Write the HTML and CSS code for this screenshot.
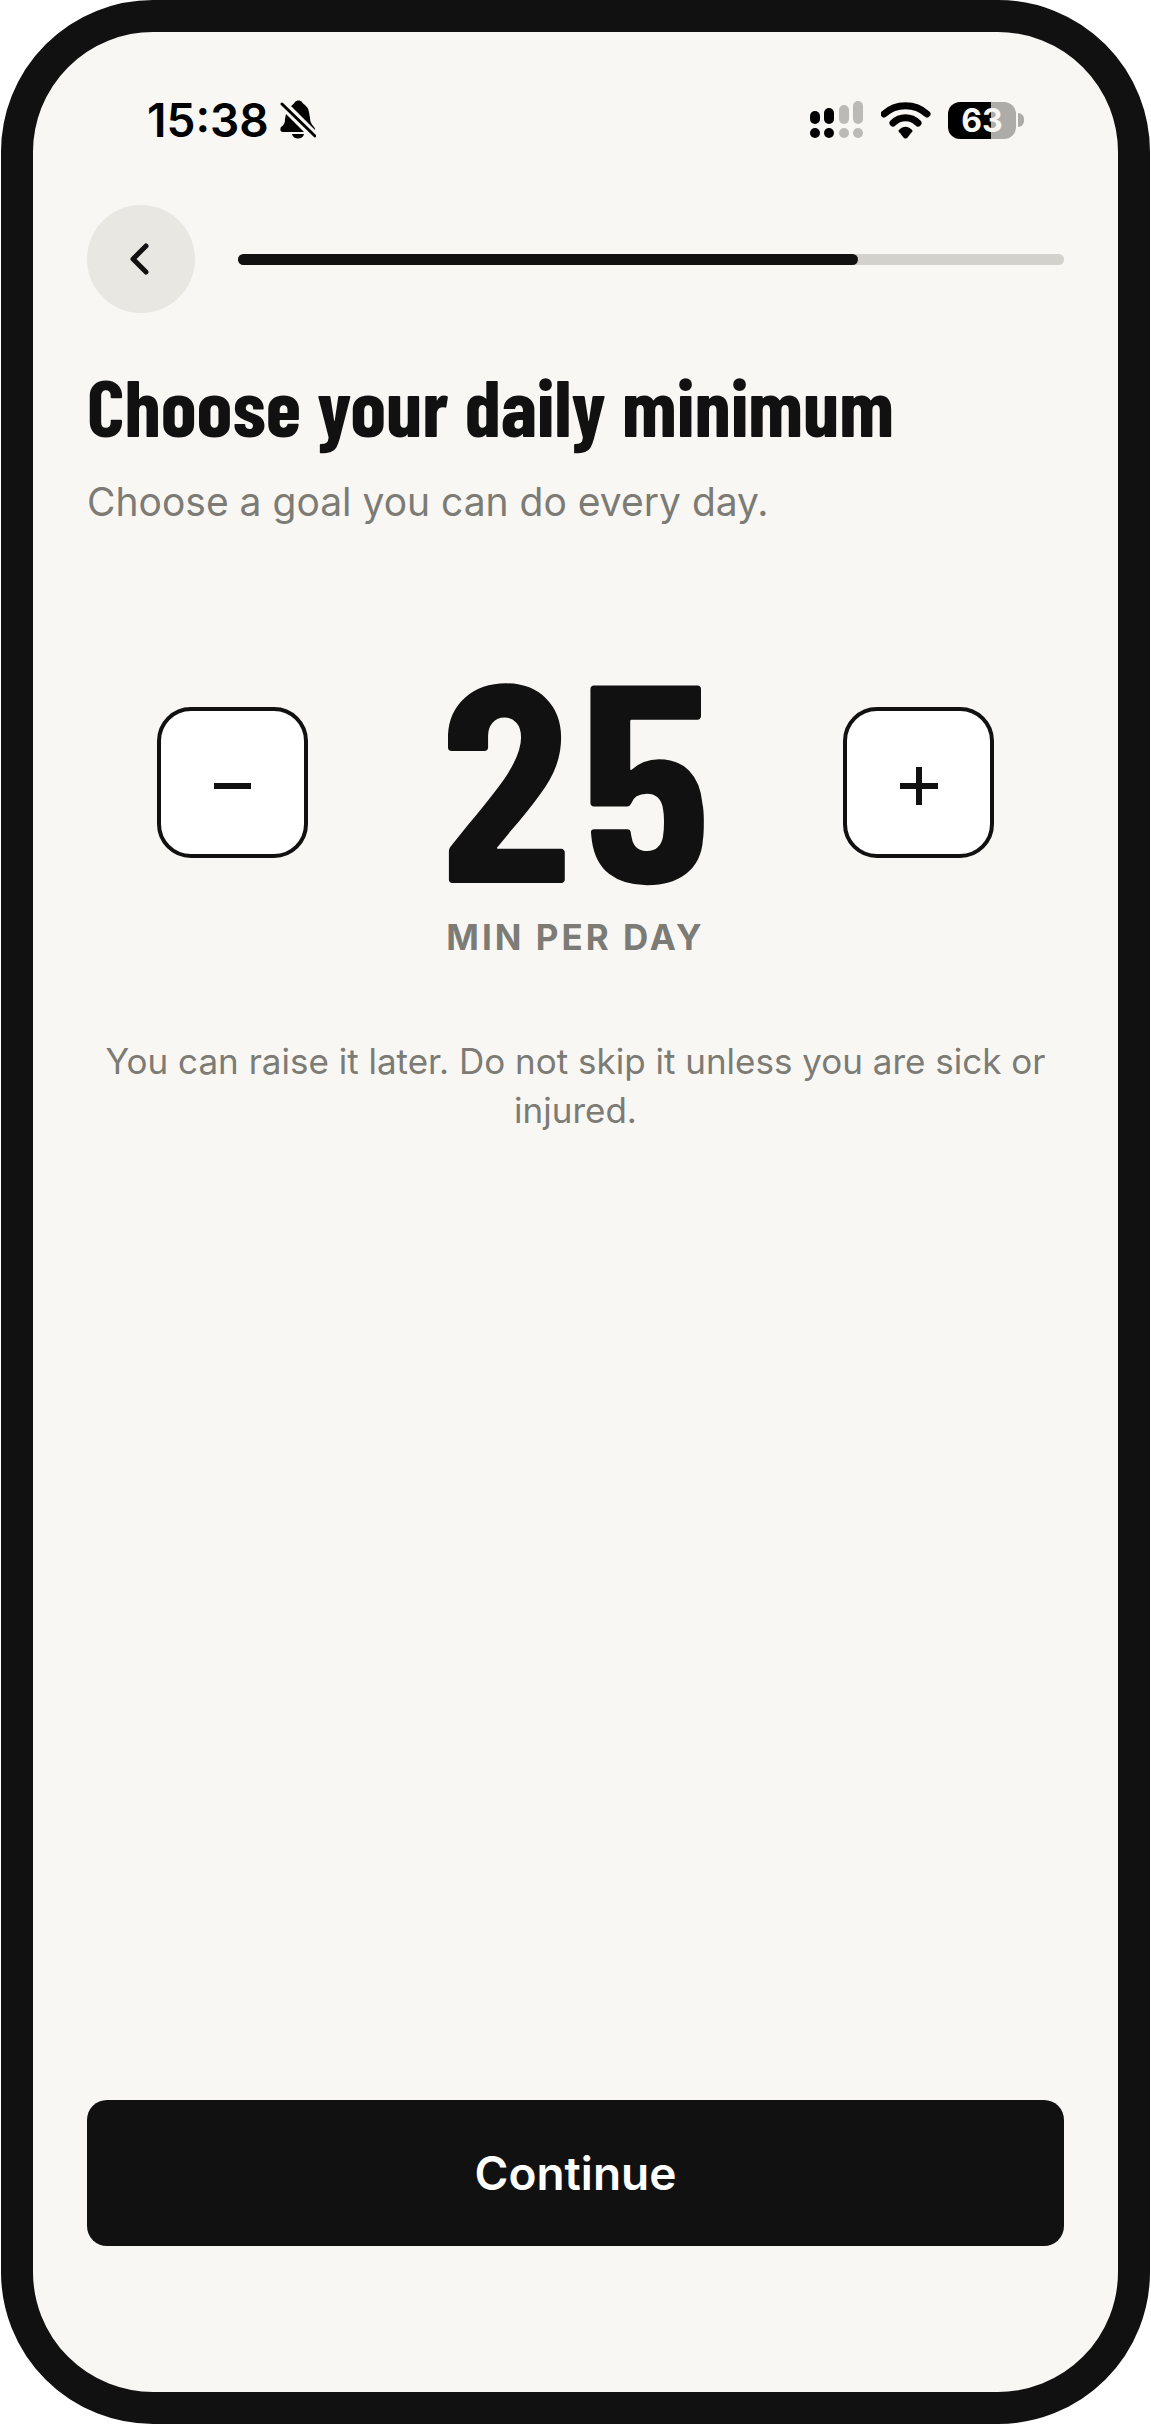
FILE: index.html
```html
<!DOCTYPE html>
<html lang="en">
    <head>
        <meta charset="utf-8">
        <meta name="viewport" content="width=device-width, initial-scale=1">
        <title>Choose your daily minimum</title>
        <link rel="stylesheet" href="styles.css">
    </head>

    <body>
        <div class="phone">

            <div class="status">
                <div class="status-left">
                    <span class="time">15:38</span>
                    <svg class="bell" width="36" height="40" viewBox="0 0 36 40">
                        <path d="M11 6C13 5 14 3 15 2C17 0 20 0 22 2C23 4 24 4 26 6C29 9 29 12 30 18C30 21 31 24 34 27C35 28 35 29 35 30Z"/>
                        <path d="M6 14L24 32H3C0 32 0 29 1 27C4 25 5 23 5 19Z"/>
                        <path d="M12 34H24C23 40 13 40 12 34Z"/>
                        <path class="slash" d="M2 4L35 36"/>
                    </svg>
                </div>

                <div class="status-right">
                    <svg width="54" height="38" viewBox="0 0 54 38">
                        <rect x="0" y="10" width="10" height="13" rx="5"/>
                        <rect x="14" y="7" width="10" height="16" rx="5"/>
                        <rect class="off" x="29" y="4" width="10" height="19" rx="5"/>
                        <rect class="off" x="43" y="0" width="10" height="23" rx="5"/>
                        <circle cx="5" cy="32" r="5"/>
                        <circle cx="19" cy="32" r="5"/>
                        <circle class="off" cx="34" cy="32" r="5"/>
                        <circle class="off" cx="48" cy="32" r="5"/>
                    </svg>
                    <svg class="wifi" width="50" height="38" viewBox="0 0 50 38">
                        <path class="arc" d="M3 13C15 2 34 2 46 13"/>
                        <path class="arc" d="M12 22C19 15 30 15 37 22"/>
                        <path d="M19 32C17 31 17 29 19 28C23 25 26 25 30 28C32 29 32 31 30 32L27 36C25 38 24 38 22 36Z"/>
                    </svg>
                    <div class="battery">
                        <div class="level">63</div>
                        <div class="tip"></div>
                    </div>
                </div>
            </div>

            <div class="top">
                <button class="back" aria-label="Back">
                    <svg width="24" height="36" viewBox="0 0 24 36">
                        <path d="M17 5L4 18L17 31"/>
                    </svg>
                </button>
                <div class="progress" role="progressbar" aria-label="Setup progress" aria-valuenow="75">
                    <div class="bar" style="width: 75%"></div>
                </div>
            </div>

            <h1>Choose your daily minimum</h1>
            <p class="sub">Choose a goal you can do every day.</p>

            <div class="stepper">
                <button class="step" id="minus" aria-label="Less">
                    <svg width="38" height="38" viewBox="0 0 38 38"><path d="M0 19H37"/></svg>
                </button>
                <div class="number" id="number">25</div>
                <button class="step" id="plus" aria-label="More">
                    <svg width="38" height="38" viewBox="0 0 38 38"><path d="M0 19H38M19 0V38"/></svg>
                </button>
            </div>
            <div class="unit">MIN PER DAY</div>

            <p class="hint">You can raise it later. Do not skip it unless you are sick or injured.</p>

            <button class="continue">Continue</button>
        </div>

        <script>
            var minutes = 25;

            function change(step) {
                minutes = Math.max(5, Math.min(95, minutes + step));
                document.getElementById("number").textContent = minutes;
            }

            document.getElementById("minus").addEventListener("click", function() { change(-5); });
            document.getElementById("plus").addEventListener("click", function() { change(5); });
        </script>
    </body>
</html>
```

FILE: styles.css
```css
* {
    box-sizing: border-box;
}

body {
    margin: 0;
    background: #fff;
    color: #111;
    font-family: Inter, "Liberation Sans", sans-serif;
}

button {
    padding: 0;
    border: 0;
    font-family: inherit;
    color: inherit;
    cursor: pointer;
}

svg {
    display: block;
}

.phone {
    display: flex;
    flex-direction: column;
    min-height: 100vh;
    margin: 0 1px;
    padding: 64px 54px 146px;
    border: 32px solid #111;
    border-radius: 152px;
    background: #f8f7f3;
}

/* status bar */
.status {
    display: flex;
    justify-content: space-between;
    align-items: center;
    height: 48px;
    padding: 0 40px 0 60px;
    color: #000;
}

.status-left {
    display: flex;
    align-items: center;
    gap: 11px;
}

.status-right {
    display: flex;
    align-items: center;
    gap: 17px;
}

.time {
    font-size: 46px;
    font-weight: 600;
    line-height: 48px;
}

.slash {
    fill: none;
    stroke: #000;
    stroke-width: 3;
    stroke-linecap: round;
}

.off {
    fill: #bbbab7;
}

.arc {
    fill: none;
    stroke: #000;
    stroke-width: 7;
    stroke-linecap: round;
}

.battery {
    display: flex;
    align-items: center;
    gap: 2px;
}

.level {
    width: 68px;
    height: 37px;
    border-radius: 12px;
    background: linear-gradient(to right, #000 63%, #adaca9 63%);
    color: #f8f7f3;
    font-size: 32px;
    font-weight: 700;
    line-height: 37px;
    text-align: center;
}

.tip {
    width: 6px;
    height: 14px;
    border-radius: 0 6px 6px 0;
    background: #adaca9;
}

/* back button and progress */
.top {
    display: flex;
    align-items: center;
    gap: 43px;
    margin-top: 61px;
}

.back {
    display: flex;
    align-items: center;
    justify-content: center;
    width: 108px;
    height: 108px;
    border-radius: 50%;
    background: #e8e7e2;
}

.back path {
    fill: none;
    stroke: #111;
    stroke-width: 5;
    stroke-linecap: round;
    stroke-linejoin: round;
}

.progress {
    flex: 1;
    height: 11px;
    border-radius: 6px;
    background: #d2d1cc;
}

.bar {
    height: 100%;
    border-radius: 6px;
    background: #111;
}

h1 {
    margin: 50px 0 0;
    font-family: "Barlow Condensed", "Liberation Sans Narrow", sans-serif;
    font-size: 81px;
    font-weight: 700;
    line-height: 84px;
}

.sub {
    margin: 30px 0 0;
    color: #7c7b75;
    font-size: 39px;
    line-height: 50px;
}

/* minutes picker */
.stepper {
    display: flex;
    align-items: center;
    justify-content: space-between;
    margin-top: 144px;
    padding: 0 70px;
}

.step {
    display: flex;
    align-items: center;
    justify-content: center;
    width: 151px;
    height: 151px;
    padding-top: 8px;
    border: 4px solid #111;
    border-radius: 34px;
    background: #fff;
}

.step path {
    stroke: #111;
    stroke-width: 6;
}

.number {
    padding-bottom: 24px;
    font-family: "Barlow Condensed", "Liberation Sans Narrow", sans-serif;
    font-size: 282px;
    font-weight: 700;
    font-variant-numeric: tabular-nums;
    line-height: 198px;
}

.unit {
    margin-top: 20px;
    color: #7c7b75;
    font-size: 35px;
    font-weight: 700;
    letter-spacing: 3px;
    line-height: 48px;
    text-align: center;
}

.hint {
    margin: 76px 0 0;
    color: #7c7b75;
    font-size: 35px;
    line-height: 49px;
    text-align: center;
}

.continue {
    height: 146px;
    margin-top: auto;
    border-radius: 20px;
    background: #111;
    color: #fff;
    font-size: 46px;
    font-weight: 600;
}
```
